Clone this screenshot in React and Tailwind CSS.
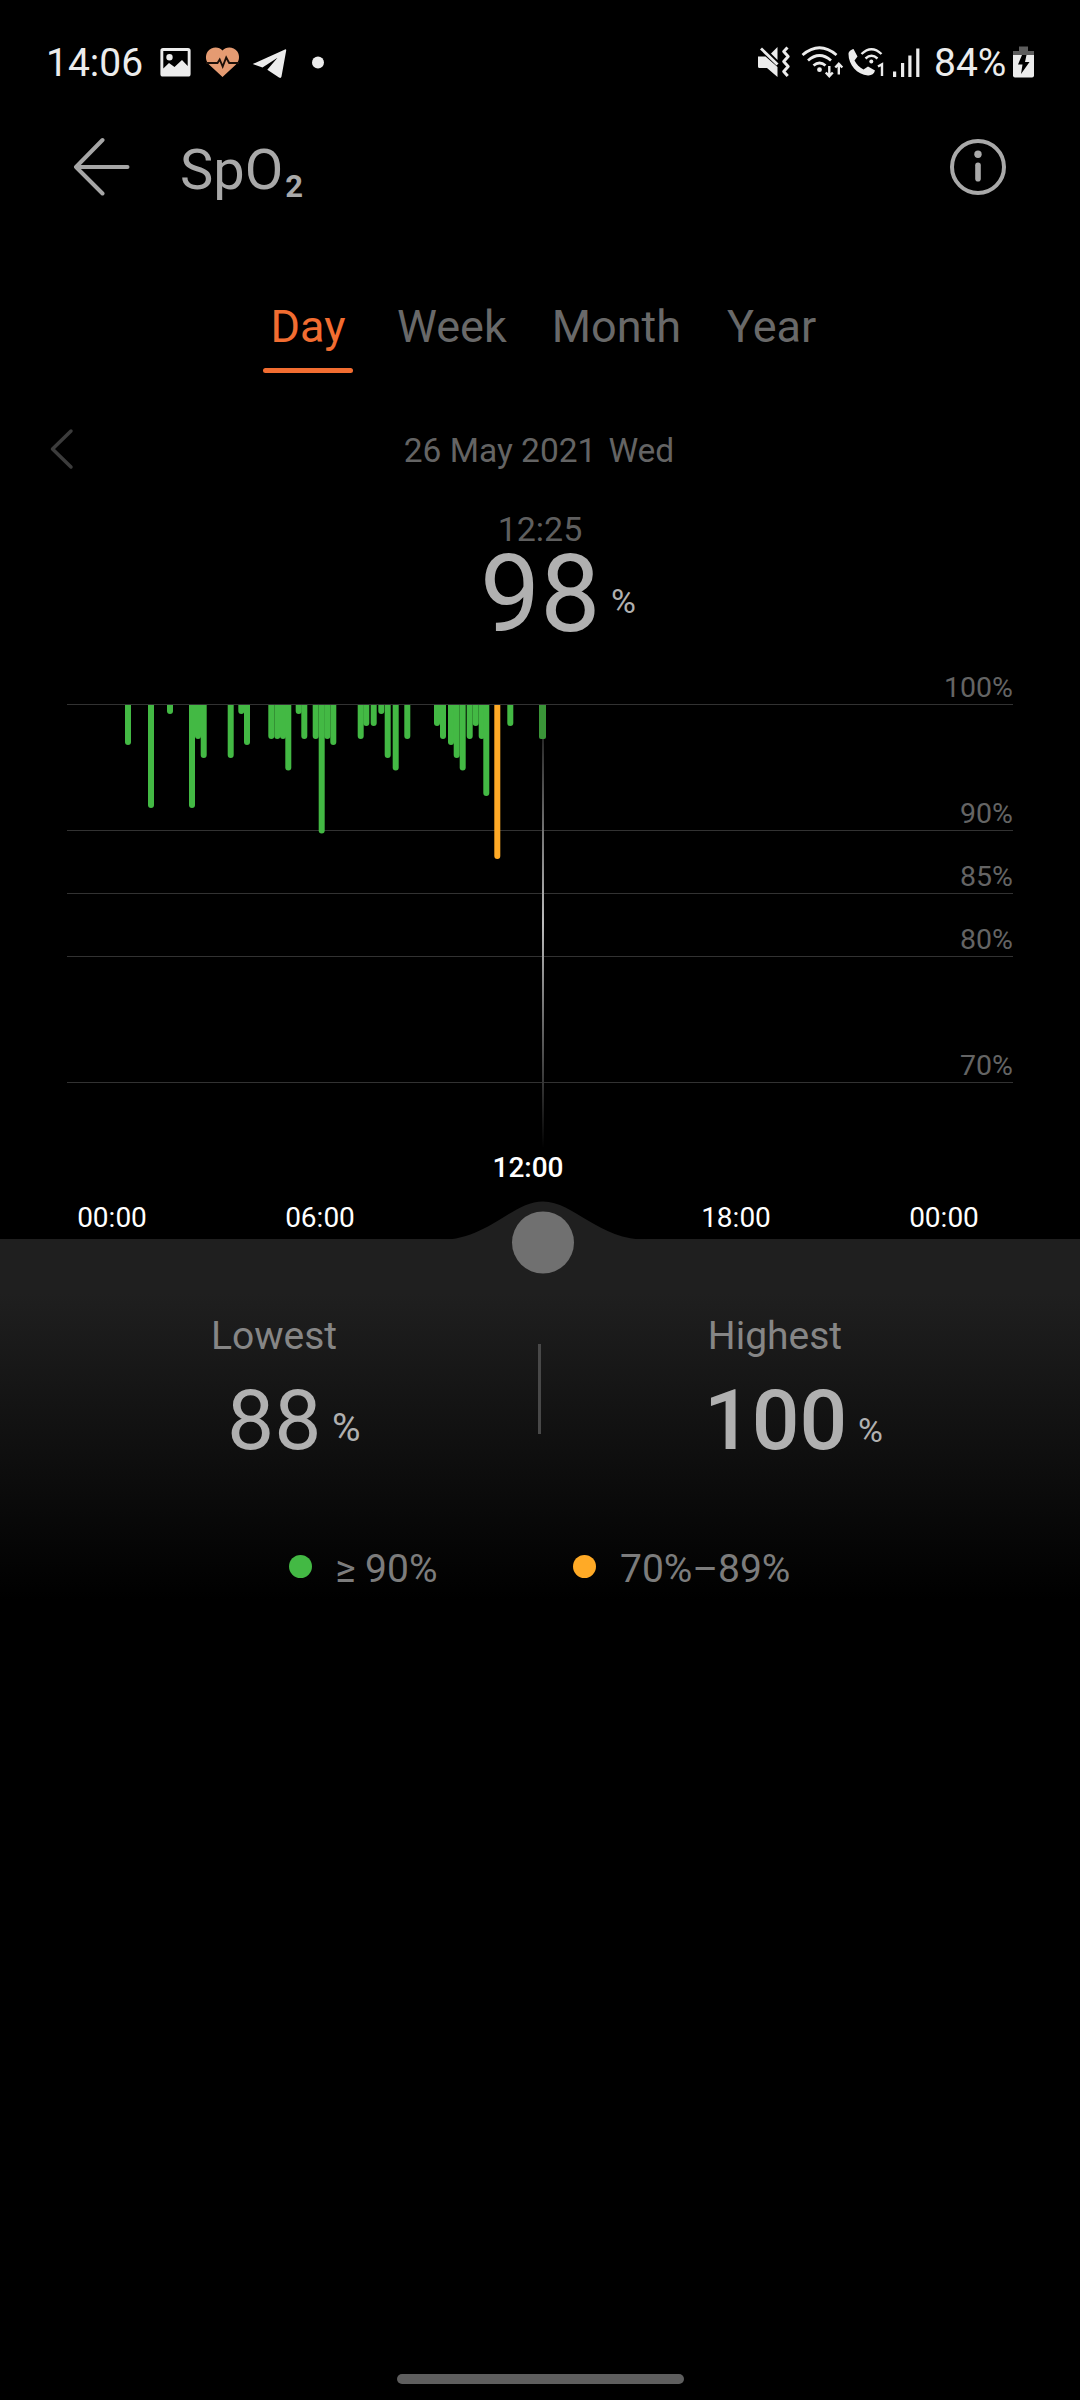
import React, { useState } from "react";

const TABS = ["Day", "Week", "Month", "Year"];

// x centre and bottom edge of every reading
const READINGS = [
  [128, 745], [151, 808], [170, 714], [192, 808], [198, 739], [203.7, 758],
  [230.7, 758], [241.3, 714], [247, 745], [271.3, 739], [277.3, 739],
  [283, 739], [288.3, 770.5], [298.7, 714], [304.3, 739], [315.7, 739],
  [321.7, 833.5], [327.3, 739], [333.3, 745], [360.7, 739], [366.3, 726],
  [373.7, 726], [381.3, 714], [387.7, 758], [395.7, 770.5], [407.3, 739],
  [437, 726], [443, 739], [451, 745], [456.7, 758], [462.7, 770.5],
  [469.7, 739], [475.7, 726], [481.7, 739], [486.3, 796], [510.3, 726],
];

const GRID = [
  { label: "100%", height: "h-[41px]" },
  { label: "90%", height: "h-[126px]" },
  { label: "85%", height: "h-[63px]" },
  { label: "80%", height: "h-[63px]" },
  { label: "70%", height: "h-[126px]" },
];

const HOURS = ["00:00", "06:00", "12:00", "18:00", "00:00"];

const StatusBar = () => (
  <div className="flex h-[125px] items-center justify-between pl-[46px] pr-[45px] text-[39px] leading-none text-[#ececec]">
    <div className="flex items-center">
      <span className="w-[114px] translate-y-px">14:06</span>
      <svg className="h-[40px] w-[170px]" viewBox="160 42 170 40" fill="#ececec">
        {/* gallery */}
        <path
          fillRule="evenodd"
          d="M163 47h25a2.6 2.6 0 0 1 2.6 2.6v23.4a2.6 2.6 0 0 1-2.6 2.6h-25a2.6 2.6 0 0 1-2.6-2.6V49.600a2.6 2.6 0 0 1 2.6-2.600zM163.300 50v17.500l5.700-5.500 5.500 4 7.500-7 5.700 6V50zM169.500 53a3.200 3.200 0 1 1 0 6.400a3.200 3.200 0 0 1 0-6.400z"
        />
        {/* heart rate */}
        <path
          d="M222.500 76L209 63.500C205.500 60 205 54.500 207.700 50.500C211.500 45.500 219 45.500 222.500 49.500C226 45.500 233.500 45.500 237.300 50.500C240 54.500 239.500 60 236 63.500Z"
          fill="#e59b72"
        />
        <path
          d="M206 62h11.500l2.200-3.500 3 7 3.500-9 3 5.500H239"
          fill="none"
          stroke="#1c0f08"
          strokeWidth="1.900"
        />
        {/* telegram */}
        <path d="M252.700 63L285 48.400Q286.400 48 286.200 49.500L281.500 75.500Q281 77.600 279 76.500L267.300 68.800L277.500 56.800L262.500 66.500Z" />
        <circle cx="318" cy="61.500" r="6" />
      </svg>
    </div>
    <div className="flex items-center">
      <svg className="h-[40px] w-[178px]" viewBox="756 42 178 40" fill="#ececec">
        {/* muted, vibrating */}
        <path d="M758 55.500h7.500L777.500 66v10L767 67h-7.500q-1.500 0-1.500-1.500z" />
        <path d="M771 52.500L777.500 46v13z" />
        <path d="M761 47.500L777.500 63.500" stroke="#ececec" strokeWidth="2.800" />
        <path
          d="M787.500 46.500l-3.800 4 4.500 5-4.500 5 4.500 5-4.500 5 4 4.500"
          fill="none"
          stroke="#ececec"
          strokeWidth="3"
          strokeLinejoin="round"
        />
        {/* wifi */}
        <g fill="none" stroke="#ececec" strokeWidth="2.800">
          <path d="M802.500 54Q819.500 39.500 836.500 54" />
          <path d="M808 59.500Q819.500 49.500 831 59.500" />
          <path d="M813.500 64.500Q819.500 59.500 825.500 64.500" />
          <path d="M829.300 65v9M825.800 71.500l3.500 3.800 3.500-3.800M838.800 73.500v-10M835.300 66.500l3.500-3.800 3.500 3.800" strokeWidth="2.400" />
        </g>
        <circle cx="819.500" cy="68.700" r="2.400" />
        {/* wifi calling */}
        <path d="M848.500 53C848.500 50.500 851 48.500 853.500 48L857.500 55.500L854.500 59.500C856.500 63.500 859.500 66.500 863.500 68.500L868 65.500L875 69.500C874 73 871.500 74.600 868 74.400C857 73.500 848.500 64 848.500 53Z" />
        <g fill="none" stroke="#ececec" strokeWidth="2.400">
          <path d="M861.500 53Q871.500 43.500 881.500 53" />
          <path d="M865.500 57.500Q871.500 52 877.500 57.500" />
        </g>
        <circle cx="871.300" cy="60.500" r="2" />
        <path d="M878 65.500l4-2.300V75" fill="none" stroke="#ececec" strokeWidth="2.400" />
        {/* signal */}
        <path d="M893 70.500h3.200V76H893zM901 62h3.200v14H901zM908.300 54.500h3.200V76h-3.200zM916.200 47.500h3.200V76h-3.200z" />
      </svg>
      <span className="w-[77px] translate-y-px">84%</span>
      <svg className="h-[40px] w-[24px]" viewBox="1011 42 24 40">
        <path d="M1019 45.500h9v4.500h6v5h-21v-5h6z" fill="#5d5d5d" />
        <path d="M1013 54h21v20.500q0 2-2 2h-17q-2 0-2-2z" fill="#ececec" />
        <path d="M1022 54h4.500l-1.500 7h4.500l-8.500 12 1.500-9.500h-4.500z" fill="#000" />
      </svg>
    </div>
  </div>
);

const Header = () => (
  <div className="flex h-[82px] items-center pl-[72px] pr-[72px]">
    <svg className="mb-[6px] h-[60px] w-[60px]" viewBox="0 0 60 60" fill="none" stroke="#a6a6a6" strokeWidth="4" strokeLinecap="round" strokeLinejoin="round">
      <path d="M30.500 4L4 31L30.500 57.500M4 31H55.500" />
    </svg>
    <h1 className="ml-[48px] flex-1 pt-[2px] text-[56px] leading-[82px] text-[#a9a9a9]">
      SpO
      <span className="ml-[2px] inline-block translate-y-[8px] text-[31px] leading-none font-bold">2</span>
    </h1>
    <svg className="mb-[6px] h-[60px] w-[60px]" viewBox="0 0 60 60" fill="none" stroke="#a9a9a9">
      <circle cx="30" cy="31" r="26" strokeWidth="4" />
      <circle cx="30" cy="18.300" r="3.700" fill="#a9a9a9" stroke="none" />
      <path d="M30 29.300v13.500" strokeWidth="5.600" strokeLinecap="round" />
    </svg>
  </div>
);

const Chart = () => (
  <div className="relative h-[575px]">
    {/* Grid lines with their labels */}
    <div className="ml-[67px] mr-[67px] text-right text-[28.5px] leading-[32px] text-[#646464]">
      {GRID.map((row) => (
        <div
          key={row.label}
          className={`${row.height} flex items-end justify-end border-b border-[#323232]`}
        >
          {row.label}
        </div>
      ))}
    </div>

    {/* Readings, the cursor and its handle */}
    <svg className="absolute top-0 left-0 h-[640px] w-[1080px]" viewBox="0 664 1080 640">
      <defs>
        <linearGradient id="cursor" x1="0" y1="739" x2="0" y2="1148" gradientUnits="userSpaceOnUse">
          <stop offset="0" stopColor="#2a2a2a" />
          <stop offset="0.45" stopColor="#bcbcbc" />
          <stop offset="1" stopColor="#000" />
        </linearGradient>
      </defs>
      {READINGS.map(([x, bottom]) => (
        <path key={x} d={`M${x - 3} 705H${x + 3}V${bottom - 3}a3 3 0 0 1 -6 0Z`} fill="#43b944" />
      ))}
      <path d="M494.300 705h6V856a3 3 0 0 1 -6 0Z" fill="#ffaa26" />
      <path d="M539 705h7V737q0 2-2 2h-3q-2 0-2-2Z" fill="#3a9538" />
      <rect x="542" y="739" width="2" height="409" fill="url(#cursor)" />
      <path d="M440 1240C488 1240 512 1201.500 543 1201.500S598 1240 648 1240Z" fill="#1f1f1f" />
      <circle cx="543" cy="1242.500" r="31" fill="#707070" />
    </svg>

    {/* Hours, the one under the cursor is raised */}
    <div className="flex pt-[118px] pl-[8px] text-[28px] leading-[34px] text-white">
      {HOURS.map((hour, i) => (
        <span
          key={i}
          className={`w-[208px] shrink-0 text-center ${i === 2 ? "-translate-y-[50px] font-medium" : ""}`}
        >
          {hour}
        </span>
      ))}
    </div>
  </div>
);

const App = () => {
  const [tab, setTab] = useState("Day");

  return (
    <div className="flex h-[2400px] w-[1080px] flex-col overflow-hidden bg-black font-['Roboto',sans-serif]">
      <StatusBar />
      <div className="h-[3px]" />
      <Header />

      {/* Tabs */}
      <div className="mt-[86px] flex h-[77px] gap-[45px] pl-[263px] text-[45px] leading-[62px] text-[#696969]">
        {TABS.map((name) => (
          <button
            key={name}
            onClick={() => setTab(name)}
            className={
              tab === name
                ? "-mr-px flex w-[90px] flex-col items-center text-[#f26d31]"
                : "flex flex-col items-center last:ml-px"
            }
          >
            {name}
            {tab === name && <span className="mt-[10px] h-[5px] w-full rounded-full bg-[#f26d31]" />}
          </button>
        ))}
      </div>

      {/* Date */}
      <div className="mt-[46px] flex h-[62px] items-center text-[33.5px] text-[#646464]">
        <svg className="ml-[48px] h-[42px] w-[28px] -translate-y-px" viewBox="48 428 28 42" fill="none" stroke="#3c3c3c" strokeWidth="3.500" strokeLinecap="round" strokeLinejoin="round">
          <path d="M71 431L52.500 449L71 467" />
        </svg>
        <div className="mr-[78px] flex flex-1 justify-center gap-[12px] pt-[2px]">
          <span>26 May 2021</span>
          <span>Wed</span>
        </div>
      </div>

      {/* Selected reading */}
      <div className="mt-[28px] flex flex-col">
        <span className="text-center text-[34px] leading-[40px] text-[#5f5f5f]">12:25</span>
        <div className="flex h-[88px] items-center pl-[480px] text-[#b0b0b0]">
          <span className="w-[131px] pt-[4px] text-[107px] leading-[88px]">98</span>
          <span className="mt-[15px] text-[34px] leading-none">%</span>
        </div>
      </div>

      <div className="mt-[27px]">
        <Chart />
      </div>

      {/* Summary */}
      <div className="h-[361px] bg-linear-to-b/srgb from-[#1f1f1f] from-15% to-black">
        <div className="flex pt-[72px]">
          <div className="w-[538px]">
            <p className="pl-[10px] text-center text-[39px] leading-[50px] text-[#868686]">Lowest</p>
            <div className="mt-[14px] flex h-[88px] items-center pl-[227px] text-[#b0b0b0]">
              <span className="w-[105px] pt-[4px] text-[84px] leading-[88px] font-[450]">88</span>
              <span className="mt-[18px] text-[39px] leading-none">%</span>
            </div>
          </div>
          <div className="mt-[33px] h-[90px] w-[3px] bg-[#484848]" />
          <div>
            <p className="w-[468px] text-center text-[39px] leading-[50px] text-[#868686]">Highest</p>
            <div className="mt-[14px] flex h-[88px] items-center pl-[163px] text-[#b0b0b0]">
              <span className="w-[154px] pt-[4px] text-[84px] leading-[88px] font-medium">100</span>
              <span className="mt-[21px] text-[34px] leading-none">%</span>
            </div>
          </div>
        </div>

        {/* Legend */}
        <div className="mt-[81px] flex h-[50px] items-center pl-[289px] text-[39px] leading-[50px] text-[#7c7c7c]">
          <span className="mb-[5px] size-[23px] rounded-full bg-[#43b944]" />
          <span className="w-[261px] pl-[23px]">≥ 90%</span>
          <span className="mb-[5px] size-[23px] rounded-full bg-[#ffaa26]" />
          <span className="pl-[24px]">70%–89%</span>
        </div>
      </div>

      {/* Gesture bar */}
      <div className="mx-auto mt-auto mb-[16px] h-[10px] w-[287px] rounded-full bg-[#5e5e5e]" />
    </div>
  );
};

export default App;
